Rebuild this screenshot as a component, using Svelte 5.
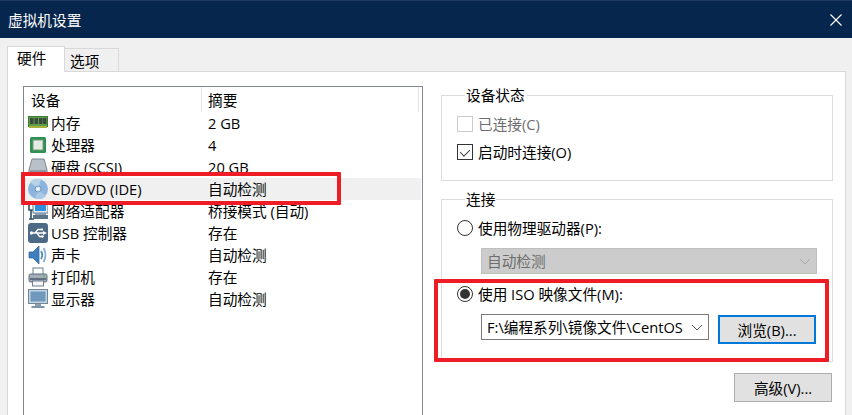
<script>
	const devices = [
		{ icon: 'ram', name: '内存', summary: '2 GB' },
		{ icon: 'cpu', name: '处理器', summary: '4' },
		{ icon: 'disk', name: '硬盘 (SCSI)', summary: '20 GB' },
		{ icon: 'cd', name: 'CD/DVD (IDE)', summary: '自动检测', selected: true },
		{ icon: 'net', name: '网络适配器', summary: '桥接模式 (自动)' },
		{ icon: 'usb', name: 'USB 控制器', summary: '存在' },
		{ icon: 'sound', name: '声卡', summary: '自动检测' },
		{ icon: 'printer', name: '打印机', summary: '存在' },
		{ icon: 'display', name: '显示器', summary: '自动检测' }
	];
</script>

<div class="window">
	<header class="titlebar">
		<span class="title">虚拟机设置</span>
		<svg class="close" width="12" height="12" viewBox="0 0 12 12" aria-label="关闭">
			<path d="M0.5 0.5 L11.5 11.5 M11.5 0.5 L0.5 11.5" stroke="#fff" stroke-width="1.1" fill="none" />
		</svg>
	</header>

	<div class="tabs">
		<div class="tab active">硬件</div>
		<div class="tab">选项</div>
	</div>

	<div class="panel">
		<div class="list">
			<div class="row head">
				<div class="col-name">设备</div>
				<div class="col-summary">摘要</div>
			</div>
			{#each devices as d}
				<div class="row" class:selected={d.selected}>
					<div class="col-name">
						<svg class="icon" width="20" height="20" viewBox="0 0 20 20">
							{#if d.icon === 'ram'}
								<rect x="0.5" y="3.5" width="19" height="10" fill="#5c9e4a" stroke="#3d7a33" />
								<rect x="2" y="5" width="3.5" height="6" fill="#3c4a3c" />
								<rect x="6.5" y="5" width="3.5" height="6" fill="#3c4a3c" />
								<rect x="11" y="5" width="3.5" height="6" fill="#3c4a3c" />
								<rect x="15" y="5" width="3.5" height="6" fill="#3c4a3c" />
								<rect x="1" y="13" width="18" height="2" fill="#a8b03c" />
							{:else if d.icon === 'cpu'}
								<rect x="2" y="2" width="16" height="16" rx="1.5" fill="#2f9150" />
								<rect x="5" y="5" width="10" height="10" fill="#e6ece4" stroke="#7a9a80" />
							{:else if d.icon === 'disk'}
								<path d="M4 2 H16 L19 13 V17 H1 V13 Z" fill="#b9c0c8" stroke="#7d8791" />
								<rect x="1.5" y="13" width="17" height="3.5" fill="#8e99a4" />
							{:else if d.icon === 'cd'}
								<circle cx="10" cy="10" r="10" fill="#8db4dc" />
								<path d="M10 10 L2 3 A10 10 0 0 1 13 0.5 Z" fill="#b8d2ea" />
								<path d="M10 10 L18 17 A10 10 0 0 1 7 19.5 Z" fill="#a9c8e6" />
								<circle cx="10" cy="10" r="3" fill="#d8e6f2" stroke="#6e97c2" />
								<circle cx="10" cy="10" r="1" fill="#fff" />
							{:else if d.icon === 'net'}
								<path d="M1 2 V9 H6 M1 18 H6 M3 9 V18" stroke="#2f4f66" stroke-width="1.6" fill="none" />
								<rect x="5" y="0" width="15" height="12" fill="#e8eef4" stroke="#5f7d96" />
								<rect x="7" y="2" width="11" height="8" fill="#2f8fdc" />
								<rect x="7" y="12" width="11" height="2" fill="#8aa0b2" />
								<rect x="5" y="14" width="15" height="4" fill="#5b7488" />
							{:else if d.icon === 'usb'}
								<rect x="0" y="0" width="20" height="20" rx="3" fill="#4c6a86" />
								<path d="M3 10 H16 M7 10 L10 6.5 H13 M9 10 L11.5 13.5 H14" stroke="#fff" stroke-width="1.3" fill="none" />
								<path d="M15 8 L19 10 L15 12 Z" fill="#fff" />
								<circle cx="3.5" cy="10" r="1.7" fill="#fff" />
								<rect x="13" y="5.5" width="2" height="2" fill="#fff" />
								<circle cx="14.5" cy="13.5" r="1.2" fill="#fff" />
							{:else if d.icon === 'sound'}
								<path d="M1 7 H5 L11 1 V19 L5 13 H1 Z" fill="#3f7fbe" stroke="#2a5f94" stroke-width="0.7" />
								<path d="M13 6 Q15.5 10 13 14" stroke="#4f8ac2" stroke-width="1.8" fill="none" />
								<path d="M15.5 3 Q19.5 10 15.5 17" stroke="#88aed2" stroke-width="1.8" fill="none" />
							{:else if d.icon === 'printer'}
								<rect x="5" y="1" width="10" height="7" fill="#fff" stroke="#6f7f8c" />
								<rect x="1" y="7" width="18" height="8" rx="1.5" fill="#a4aeb8" stroke="#5e6e7c" />
								<rect x="2" y="11" width="16" height="2" fill="#5e6e7c" />
								<rect x="15" y="8.5" width="2" height="1.5" fill="#5cc060" />
								<rect x="4.5" y="14" width="11" height="5" fill="#f4f6f8" stroke="#6f7f8c" />
							{:else if d.icon === 'display'}
								<rect x="0.5" y="0.5" width="19" height="14" fill="#c6d4e0" stroke="#6e8699" />
								<rect x="2.5" y="2.5" width="15" height="10" fill="#6f98bd" />
								<rect x="7" y="15" width="6" height="2" fill="#8aa0b2" />
								<rect x="3.5" y="17" width="13" height="2" fill="#7d95aa" />
							{/if}
						</svg>
						<span>{d.name}</span>
					</div>
					<div class="col-summary">{d.summary}</div>
				</div>
			{/each}
		</div>

		<div class="side">
			<fieldset class="group status">
				<legend>设备状态</legend>
				<label class="opt disabled"><input type="checkbox" disabled />已连接(C)</label>
				<label class="opt">
					<input type="checkbox" checked />启动时连接(O)
				</label>
			</fieldset>

			<fieldset class="group connect">
				<legend>连接</legend>
				<label class="opt"><input type="radio" name="conn" />使用物理驱动器(P):</label>
				<div class="combo off">
					<span>自动检测</span>
					<svg width="12" height="7" viewBox="0 0 12 7"><path d="M1 1 L6 6 L11 1" stroke="#a8a8a8" fill="none" /></svg>
				</div>
				<label class="opt iso"><input type="radio" name="conn" checked />使用 ISO 映像文件(M):</label>
				<div class="iso-row">
					<div class="combo path">
						<span>F:\编程系列\镜像文件\CentOS</span>
						<svg width="12" height="7" viewBox="0 0 12 7"><path d="M1 1 L6 6 L11 1" stroke="#555" fill="none" /></svg>
					</div>
					<button class="btn focus">浏览(B)...</button>
				</div>
			</fieldset>

			<button class="btn advanced">高级(V)...</button>
		</div>
	</div>

	<!-- red annotation boxes from the screenshot -->
	<div class="mark mark-cd"></div>
	<div class="mark mark-iso"></div>
</div>

<style>
	:global(body) {
		margin: 0;
		overflow: hidden;
	}

	.window {
		position: relative;
		width: 852px;
		height: 415px;
		overflow: hidden;
		display: flex;
		flex-direction: column;
		background: #f0f0f0;
		color: #000;
		font-family: "Open Sans", "Noto Sans CJK SC", sans-serif;
		font-size: 14.67px;
		line-height: 20px;
	}

	.titlebar {
		height: 37px;
		flex: none;
		display: flex;
		align-items: center;
		justify-content: space-between;
		padding: 0 10px 0 8px;
		background: #07264d;
		border-top: 1px solid #1f3a5e;
		color: #fff;
	}

	.close {
		margin-top: 1px;
	}

	.tabs {
		flex: none;
		height: 34px;
		display: flex;
		align-items: flex-end;
		padding-left: 7px;
		margin-bottom: -1px;
		position: relative;
		z-index: 1;
	}

	.tab {
		width: 48px;
		height: 23px;
		padding-left: 5px;
		border: 1px solid #d9d9d9;
		border-left: none;
		border-bottom: none;
		line-height: 24px;
		box-sizing: content-box;
	}

	.tab.active {
		width: 47px;
		height: 25px;
		padding-left: 9px;
		background: #fff;
		border-left: 1px solid #d9d9d9;
		line-height: 22px;
	}

	.panel {
		flex: 1;
		margin: 0 6px 0 7px;
		background: #fff;
		border: 1px solid #d9d9d9;
		border-bottom: none;
		padding: 13px 0 0 15px;
		display: flex;
		gap: 18px;
	}

	.list {
		width: 398px;
		height: 340px;
		flex: none;
		margin-top: 1px;
		border: 1px solid #828790;
		padding-bottom: 20px;
	}

	.row {
		display: flex;
		height: 22px;
		line-height: 22px;
		white-space: nowrap;
	}

	.row.head {
		height: 25px;
		line-height: 26px;
		position: relative;
	}

	.row.head .col-name {
		padding-left: 7px;
	}

	.row.head .col-summary {
		border-left: 1px solid #e5e5e5;
		border-right: 1px solid #e5e5e5;
		width: 218px;
		height: 25px;
		padding-left: 6px;
		box-sizing: border-box;
	}

	.row.selected {
		background: #f0f0f0;
		margin-right: 1px;
	}

	.col-name {
		width: 177px;
		flex: none;
		display: flex;
		align-items: center;
		box-sizing: border-box;
		padding-left: 4px;
	}

	.icon {
		flex: none;
		margin-right: 3px;
	}

	.col-summary {
		padding-left: 7px;
	}

	.side {
		width: 392px;
		flex: none;
		display: flex;
		flex-direction: column;
	}

	.group {
		margin: 0;
		border: 1px solid #dcdcdc;
		padding: 5px 15px 0;
		min-width: 0;
	}

	.group legend {
		padding: 0 1px;
		margin-left: 8px;
		line-height: 20px;
	}

	.status {
		height: 96px;
		box-sizing: border-box;
	}

	.connect {
		margin-top: 8px;
		height: 173px;
		box-sizing: border-box;
	}

	.opt {
		display: flex;
		align-items: center;
		height: 28px;
		gap: 5px;
	}

	.opt.disabled {
		color: #6d6d6d;
	}

	.opt input {
		appearance: none;
		width: 16px;
		height: 16px;
		margin: 0;
		box-sizing: border-box;
		background: #fff;
		border: 1px solid #333;
		flex: none;
		position: relative;
	}

	.opt input:disabled {
		border-color: #ccc;
	}

	.opt input[type="checkbox"]:checked {
		background:
			linear-gradient(#333, #333) no-repeat;
		background-size: 0 0;
	}

	.opt input[type="checkbox"]:checked::after {
		content: "";
		position: absolute;
		left: 4px;
		top: 2px;
		width: 5px;
		height: 8px;
		border: solid #444;
		border-width: 0 1.5px 1.5px 0;
		transform: rotate(45deg);
	}

	.opt input[type="radio"] {
		border-radius: 50%;
	}

	.opt input[type="radio"]:checked::after {
		content: "";
		position: absolute;
		left: 2px;
		top: 2px;
		width: 10px;
		height: 10px;
		border-radius: 50%;
		background: #333;
	}

	.combo {
		display: flex;
		align-items: center;
		justify-content: space-between;
		box-sizing: border-box;
		height: 26px;
		margin: 6px 0 0 24px;
		padding: 0 5px;
		white-space: nowrap;
		overflow: hidden;
	}

	.combo.off {
		width: 336px;
		background: #cccccc;
		border: 1px solid #bfbfbf;
		color: #6d6d6d;
	}

	.combo.path {
		width: 228px;
		margin: 0 0 0 24px;
		background: #fff;
		border: 1px solid #7a7a7a;
		flex: none;
	}

	.combo.path span {
		overflow: hidden;
	}

	.combo.path svg {
		flex: none;
		margin-left: 4px;
	}

	.opt.iso {
		margin-top: 6px;
	}

	.iso-row {
		display: flex;
		align-items: flex-start;
		gap: 9px;
		margin-top: 6px;
	}

	.btn {
		width: 98px;
		height: 29px;
		box-sizing: border-box;
		padding: 0;
		background: #e1e1e1;
		border: 1px solid #adadad;
		font: inherit;
		color: #000;
	}

	.btn.focus {
		margin-top: 1px;
		border: 2px solid #0078d7;
	}

	.btn.advanced {
		align-self: flex-end;
		margin: 11px 1px 0 0;
	}

	.mark {
		position: absolute;
		box-sizing: border-box;
		border: 4px solid #ee1c25;
		border-radius: 1px;
		pointer-events: none;
	}

	.mark-cd {
		left: 21px;
		top: 172px;
		width: 320px;
		height: 33px;
	}

	.mark-iso {
		left: 434px;
		top: 279px;
		width: 395px;
		height: 83px;
	}
</style>
